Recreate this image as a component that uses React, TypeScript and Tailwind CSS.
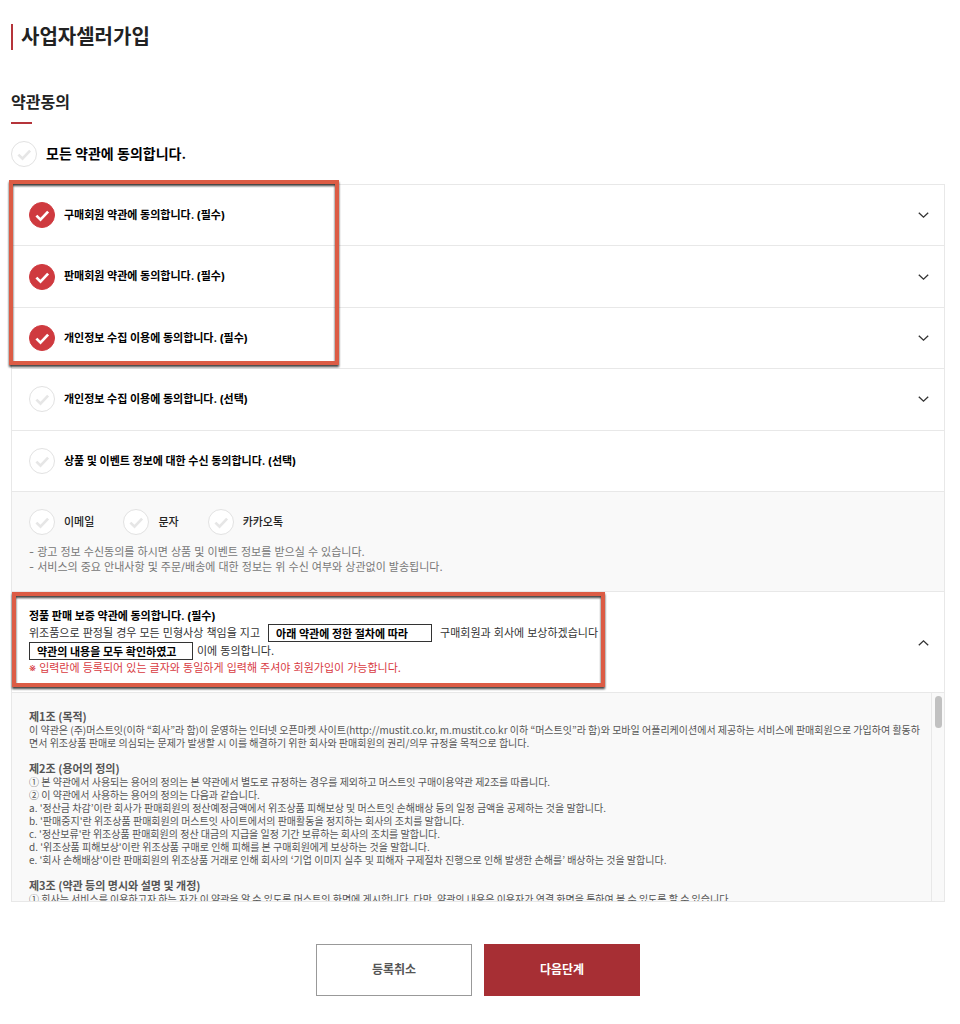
import React, { useState } from 'react';

interface CheckProps {
    label: string;
    defaultChecked?: boolean;
    textClass?: string;
}

const Check: React.FC<CheckProps> = ({ label, defaultChecked = false, textClass = 'text-[11px] font-bold text-black' }) => {
    const [checked, setChecked] = useState(defaultChecked);

    return (
        <label className="flex items-center gap-[9px] cursor-pointer">
            <span className="grid shrink-0">
                <input
                    type="checkbox"
                    checked={checked}
                    onChange={() => setChecked(!checked)}
                    className="col-start-1 row-start-1 appearance-none w-[26px] h-[26px] rounded-full border border-[#e2e2e2] bg-white checked:bg-[#cf3a3f] checked:border-[#cf3a3f]"
                />
                <svg
                    viewBox="0 0 26 26"
                    fill="none"
                    strokeWidth="2.7"
                    className={`col-start-1 row-start-1 w-[26px] h-[26px] pointer-events-none ${checked ? 'stroke-white' : 'stroke-[#e6e6e6]'}`}
                >
                    <path d="M7.4 13.6l4.1 4 7.6-8" />
                </svg>
            </span>
            <span className={textClass}>{label}</span>
        </label>
    );
};

const Chevron: React.FC<{ up?: boolean; label: string }> = ({ up = false, label }) => (
    <button type="button" aria-label={label} className="shrink-0 w-[12px] h-[12px]">
        <svg viewBox="0 0 12 12" fill="none" stroke="#333" strokeWidth="1.3" className="w-[12px] h-[12px]">
            <path d={up ? 'M1.8 8.3L6.5 3.8l4.7 4.5' : 'M1.8 3.7l4.7 4.5 4.7-4.5'} />
        </svg>
    </button>
);

const agreements = [
    { label: '구매회원 약관에 동의합니다. (필수)', checked: true, expandable: true },
    { label: '판매회원 약관에 동의합니다. (필수)', checked: true, expandable: true },
    { label: '개인정보 수집 이용에 동의합니다. (필수)', checked: true, expandable: true },
    { label: '개인정보 수집 이용에 동의합니다. (선택)', checked: false, expandable: true },
    { label: '상품 및 이벤트 정보에 대한 수신 동의합니다. (선택)', checked: false, expandable: false },
];

const channels = ['이메일', '문자', '카카오톡'];

const terms = [
    {
        title: '제1조 (목적)',
        lines: [
            '이 약관은 (주)머스트잇(이하 “회사”라 함)이 운영하는 인터넷 오픈마켓 사이트(http://mustit.co.kr, m.mustit.co.kr 이하 “머스트잇”라 함)와 모바일 어플리케이션에서 제공하는 서비스에 판매회원으로 가입하여 활동하면서 위조상품 판매로 의심되는 문제가 발생할 시 이를 해결하기 위한 회사와 판매회원의 권리/의무 규정을 목적으로 합니다.',
        ],
    },
    {
        title: '제2조 (용어의 정의)',
        lines: [
            '① 본 약관에서 사용되는 용어의 정의는 본 약관에서 별도로 규정하는 경우를 제외하고 머스트잇 구매이용약관 제2조를 따릅니다.',
            '② 이 약관에서 사용하는 용어의 정의는 다음과 같습니다.',
            "a. '정산금 차감’이란 회사가 판매회원의 정산예정금액에서 위조상품 피해보상 및 머스트잇 손해배상 등의 일정 금액을 공제하는 것을 말합니다.",
            "b. '판매중지'란 위조상품 판매회원의 머스트잇 사이트에서의 판매활동을 정지하는 회사의 조치를 말합니다.",
            "c. '정산보류'란 위조상품 판매회원의 정산 대금의 지급을 일정 기간 보류하는 회사의 조치를 말합니다.",
            "d. '위조상품 피해보상'이란 위조상품 구매로 인해 피해를 본 구매회원에게 보상하는 것을 말합니다.",
            "e. '회사 손해배상'이란 판매회원의 위조상품 거래로 인해 회사의 ‘기업 이미지 실추 및 피해자 구제절차 진행으로 인해 발생한 손해를’ 배상하는 것을 말합니다.",
        ],
    },
    {
        title: '제3조 (약관 등의 명시와 설명 및 개정)',
        lines: [
            '① 회사는 서비스를 이용하고자 하는 자가 이 약관을 알 수 있도록 머스트잇 화면에 게시합니다. 다만, 약관의 내용은 이용자가 연결 화면을 통하여 볼 수 있도록 할 수 있습니다.',
        ],
    },
];

const Highlight: React.FC<{ className: string }> = ({ className }) => (
    <div
        className={`absolute pointer-events-none border-4 border-[#dc5c45] drop-shadow-[0_2px_1px_rgba(0,0,0,0.75)] ${className}`}
    />
);

export default function App() {
    return (
        <div className="min-h-screen bg-white pl-[11px] pr-[15px] pt-6 pb-7 font-['Inter','Noto_Sans_CJK_KR',sans-serif]">
            <h1 className="border-l-2 border-[#b5343a] pl-2 text-[20px] leading-[26px] font-bold text-[#222]">
                사업자셀러가입
            </h1>

            <h2 className="mt-10 text-[16px] leading-6 font-bold text-[#222]">약관동의</h2>
            <div className="mt-2 mb-[17px] w-[21px] h-[2px] bg-[#b5343a]" />

            <Check label="모든 약관에 동의합니다." textClass="text-[14px] leading-5 font-bold text-black" />

            <section className="relative mt-[17px] border border-[#e8e8e8]">
                <Highlight className="-left-[3px] -top-[5px] w-[330px] h-[185px]" />

                <ul className="grid auto-rows-fr min-h-[307px]">
                    {agreements.map((item) => (
                        <li
                            key={item.label}
                            className="flex items-center justify-between pl-[17px] pr-[15px] border-b border-[#e8e8e8]"
                        >
                            <Check label={item.label} defaultChecked={item.checked} />
                            {item.expandable && <Chevron label={`${item.label} 펼치기`} />}
                        </li>
                    ))}
                </ul>

                <div className="bg-[#f9f9f9] px-[17px] pt-[17px] pb-4 border-b border-[#e8e8e8]">
                    <div className="flex gap-[29px]">
                        {channels.map((name) => (
                            <Check key={name} label={name} textClass="text-[11px] font-medium text-[#222]" />
                        ))}
                    </div>
                    <p className="mt-[10px] text-[11px] leading-[15px] text-[#777]">
                        - 광고 정보 수신동의를 하시면 상품 및 이벤트 정보를 받으실 수 있습니다.
                        <br />- 서비스의 중요 안내사항 및 주문/배송에 대한 정보는 위 수신 여부와 상관없이 발송됩니다.
                    </p>
                </div>

                <div className="relative flex items-center justify-between pl-[17px] pr-[15px] pt-[17px] pb-4 border-b border-[#e8e8e8]">
                    <Highlight className="left-0 top-0 w-[593px] h-[95px]" />
                    <div className="text-[11px] text-[#333]">
                        <p className="leading-[15px] font-bold text-black">정품 판매 보증 약관에 동의합니다. (필수)</p>
                        <div className="flex items-center gap-2 h-[18px] whitespace-nowrap">
                            <span>위조품으로 판정될 경우 모든 민형사상 책임을 지고</span>
                            <input
                                type="text"
                                aria-label="보상 절차 확인 문구"
                                defaultValue="아래 약관에 정한 절차에 따라"
                                className="w-[164px] h-[18px] px-[7px] border border-[#333] text-[11px] font-bold text-black"
                            />
                            <span>구매회원과 회사에 보상하겠습니다</span>
                        </div>
                        <div className="flex items-center gap-1 h-[18px] whitespace-nowrap">
                            <input
                                type="text"
                                aria-label="약관 내용 확인 문구"
                                defaultValue="약관의 내용을 모두 확인하였고"
                                className="w-[164px] h-[18px] px-[7px] border border-[#333] text-[11px] font-bold text-black"
                            />
                            <span>이에 동의합니다.</span>
                        </div>
                        <p className="leading-[16px] text-[#d8393f]">
                            ※ 입력란에 등록되어 있는 글자와 동일하게 입력해 주셔야 회원가입이 가능합니다.
                        </p>
                    </div>
                    <Chevron up label="정품 판매 보증 약관 접기" />
                </div>

                <div className="flex h-[208px] bg-[#f9f9f9]">
                    <div className="flex-1 overflow-y-auto [scrollbar-width:none] break-all pl-[17px] pr-[10px] pt-[17px] text-[10px] leading-[13px] text-[#555] font-['Noto_Sans_CJK_KR',sans-serif]">
                        {terms.map((article) => (
                            <article key={article.title} className="mb-[13px]">
                                <h3 className="text-[11px] font-bold">{article.title}</h3>
                                {article.lines.map((line) => (
                                    <p key={line}>{line}</p>
                                ))}
                            </article>
                        ))}
                    </div>
                    <div className="w-[13px] border-l border-[#e8e8e8] pl-[3px] pt-[3px]">
                        <div className="w-[7px] h-8 rounded-full bg-[#c1c1c1]" />
                    </div>
                </div>
            </section>

            <div className="mt-[42px] flex justify-center gap-3">
                <button type="button" className="w-[156px] h-[52px] border border-[#999] bg-white text-[12px] font-bold text-[#555]">
                    등록취소
                </button>
                <button type="button" className="w-[156px] h-[52px] bg-[#a72f34] text-[12px] font-bold text-white">
                    다음단계
                </button>
            </div>
        </div>
    );
}
